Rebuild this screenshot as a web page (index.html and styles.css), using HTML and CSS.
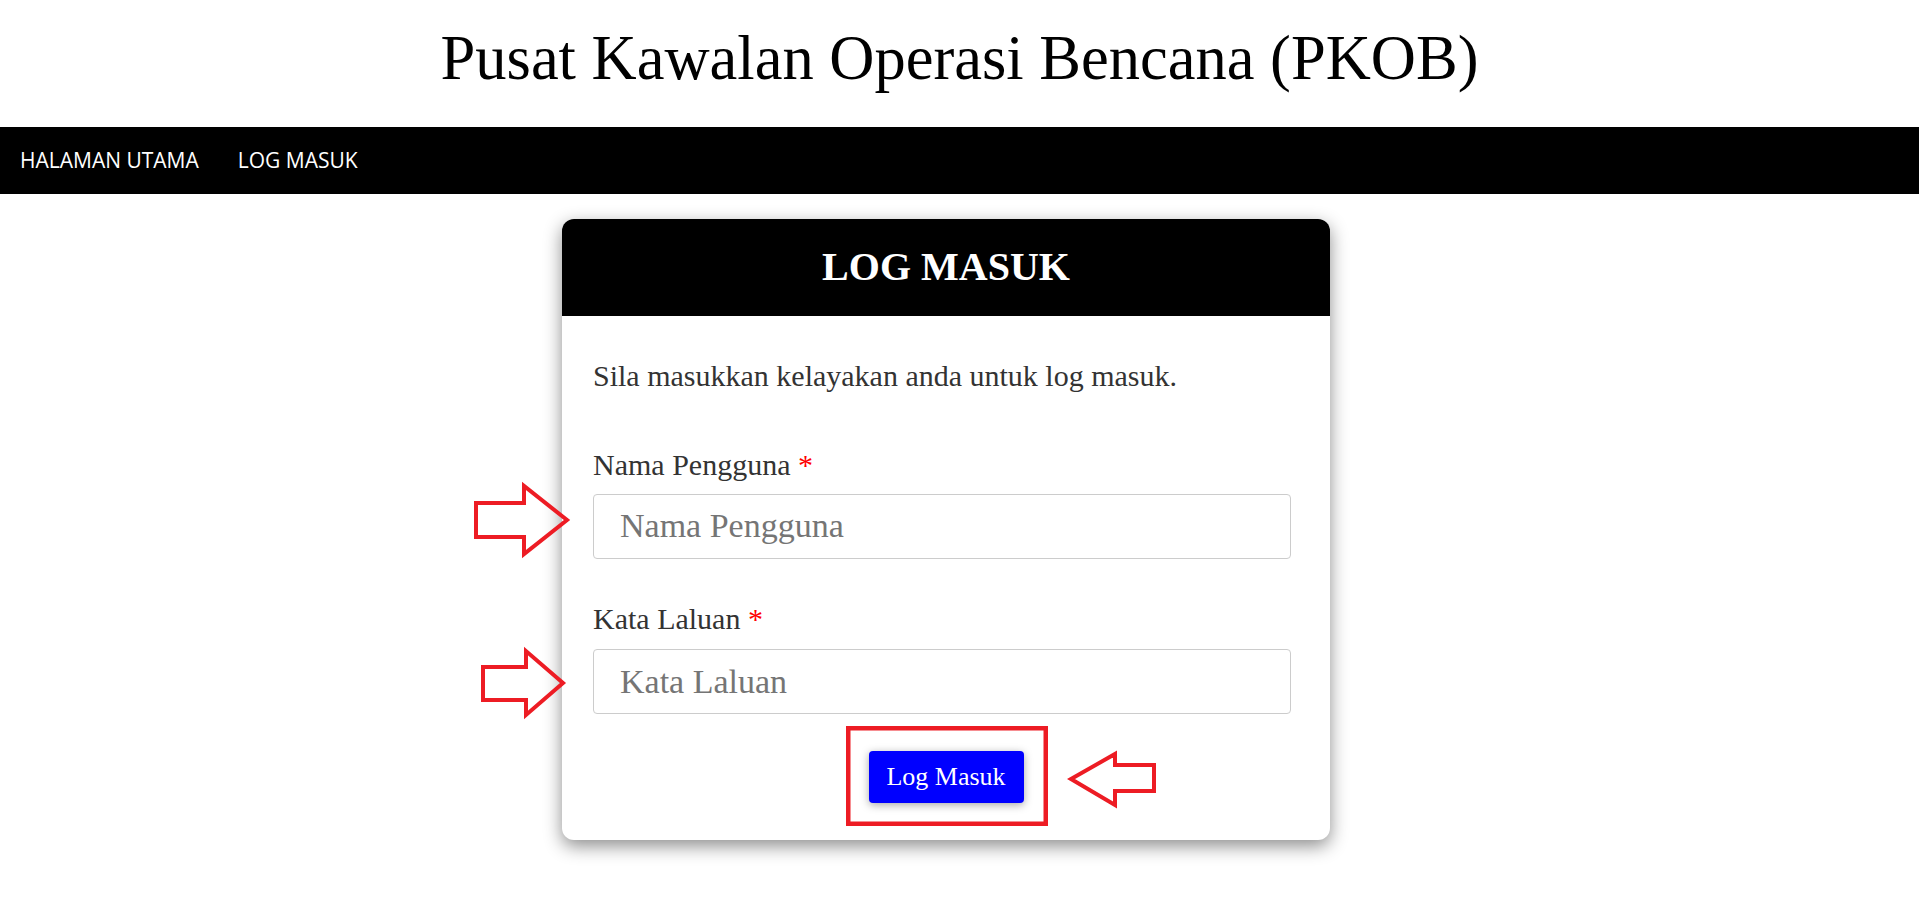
FILE: index.html
```html
<!DOCTYPE html>
<html lang="ms">
<head>
<meta charset="utf-8">
<title>Log Masuk - PKOB</title>
<link rel="stylesheet" href="styles.css">
</head>
<body>
<header class="site-header">
  <h1 class="site-title">Pusat Kawalan Operasi Bencana (PKOB)</h1>
</header>
<nav class="topnav">
  <a class="nav-link" href="#">HALAMAN UTAMA</a>
  <a class="nav-link" href="#">LOG MASUK</a>
</nav>
<main class="main">
  <section class="card">
    <div class="card-head">LOG MASUK</div>
    <form class="card-body">
      <p class="intro">Sila masukkan kelayakan anda untuk log masuk.</p>
      <label class="field-label" for="user">Nama Pengguna <span class="req">*</span></label>
      <input class="field-input" id="user" type="text" placeholder="Nama Pengguna">
      <label class="field-label second" for="pass">Kata Laluan <span class="req">*</span></label>
      <input class="field-input" id="pass" type="password" placeholder="Kata Laluan">
      <div class="actions">
        <button class="btn" type="button">Log Masuk</button>
      </div>
    </form>
  </section>
</main>
<svg class="annotations" width="1919" height="917" viewBox="0 0 1919 917" aria-hidden="true">
  <g fill="none" stroke="#ed1c24" stroke-width="4" stroke-linejoin="miter">
    <polygon points="476,503 524,503 524,486 567,520 524,554 524,537 476,537"/>
    <polygon points="483,667 526,667 526,651 563,683 526,715 526,700 483,700"/>
    <polygon points="1071,779 1115,754 1115,765 1154,765 1154,791 1115,791 1115,805"/>
    <rect x="848.25" y="728.25" width="197.5" height="95.5" stroke-width="4.5"/>
  </g>
</svg>
</body>
</html>
```

FILE: styles.css
```css
html, body {
  margin: 0;
  padding: 0;
  background: #ffffff;
}
body {
  font-family: "Liberation Serif", "Times New Roman", serif;
  color: #333333;
  position: relative;
  min-height: 917px;
}
.site-header {
  padding: 23px 0 32px;
  text-align: center;
}
.site-title {
  margin: 0;
  font-size: 62.5px;
  font-weight: normal;
  line-height: 1.15;
  color: #000000;
}
.topnav {
  background: #000000;
  height: 67px;
  display: flex;
  align-items: center;
}
.nav-link {
  font-family: "Open Sans", "Noto Sans", sans-serif;
  font-size: 21px;
  color: #ffffff;
  text-decoration: none;
  padding: 0 19px 0 20px;
  line-height: 1;
}
.main {
  padding-top: 25px;
  padding-bottom: 40px;
}
.card {
  width: 768px;
  margin-left: 562px;
  background: #ffffff;
  border-radius: 12px;
  box-shadow: 0 6px 18px rgba(0, 0, 0, 0.45);
  overflow: hidden;
}
.card-head {
  height: 97px;
  background: #000000;
  color: #ffffff;
  font-weight: bold;
  font-size: 40px;
  line-height: 1;
  display: flex;
  align-items: center;
  justify-content: center;
}
.card-body {
  display: block;
  padding: 43px 39px 37px 31px;
  margin: 0;
}
.intro {
  margin: 0 0 55px;
  font-size: 30px;
  line-height: 1.15;
}
.field-label {
  display: block;
  font-size: 30px;
  line-height: 1.15;
  margin-bottom: 11px;
}
.field-label.second {
  margin-top: 43px;
  margin-bottom: 13px;
}
.req {
  color: #ff0000;
}
.field-input {
  display: block;
  box-sizing: border-box;
  width: 100%;
  height: 65px;
  margin: 0;
  padding: 0 26px;
  border: 1px solid #cccccc;
  border-radius: 4px;
  font-family: "Liberation Serif", "Times New Roman", serif;
  font-size: 34px;
  color: #333333;
  background: #ffffff;
  outline: none;
}
.field-input::placeholder {
  color: #757575;
}
.actions {
  display: flex;
  justify-content: center;
  padding-top: 37px;
  padding-left: 8px;
}
.btn {
  width: 155px;
  height: 52px;
  background: #0000ff;
  color: #ffffff;
  border: none;
  border-radius: 4px;
  font-family: "Liberation Serif", "Times New Roman", serif;
  font-size: 26px;
  line-height: 1;
  padding: 0;
  box-shadow: 0 2px 8px rgba(0, 0, 0, 0.35);
  cursor: pointer;
}
.annotations {
  position: absolute;
  top: 0;
  left: 0;
  pointer-events: none;
}
```
